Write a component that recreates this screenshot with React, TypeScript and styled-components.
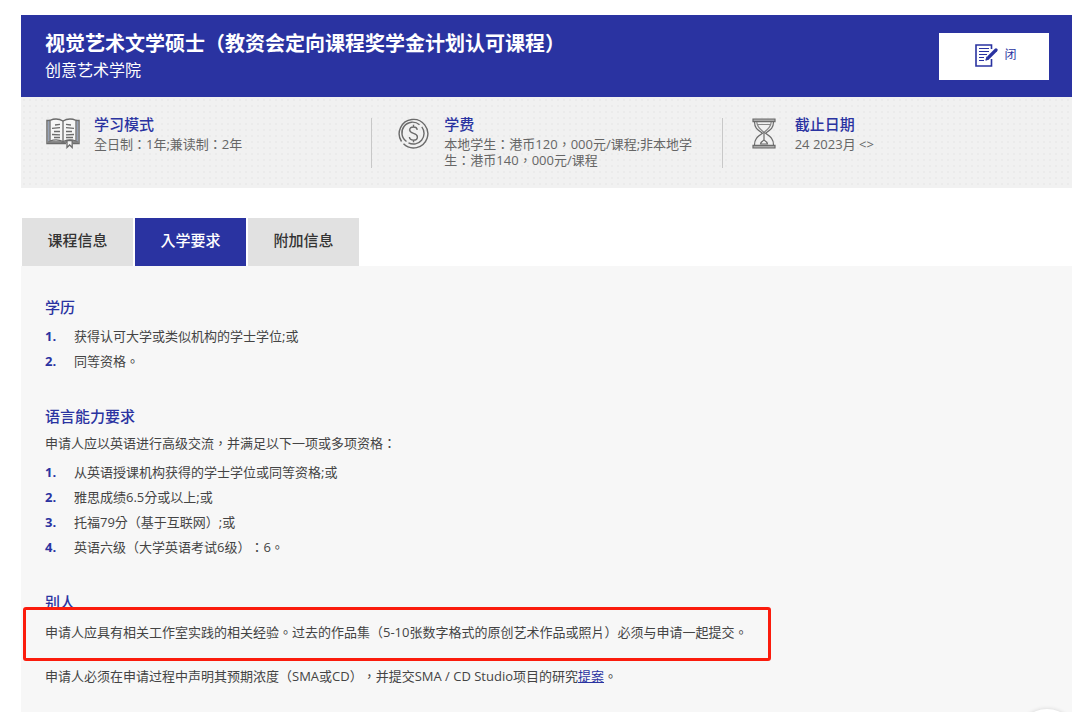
import React, { useState } from "react";
import styled, { createGlobalStyle } from "styled-components";

const navy = "#2a33a1";

const GlobalStyle = createGlobalStyle`
  *, *::before, *::after { box-sizing: border-box; }
  body {
    margin: 0;
    background: #fff;
    color: #444;
    font-family: "Open Sans", "Noto Sans CJK TC", sans-serif;
    font-size: 13px;
    line-height: 16px;
    text-spacing-trim: space-all;
  }
  h1, h2, h3, p, ol, ul { margin: 0; padding: 0; font-weight: 400; }
  ol, ul { list-style: none; }
  button { font: inherit; border: 0; cursor: pointer; }
`;

const Page = styled.main`
  display: flex;
  flex-direction: column;
  min-height: 100vh;
  padding: 15px 8px 0 21px;
`;

const Banner = styled.header`
  display: flex;
  justify-content: space-between;
  align-items: center;
  min-height: 82px;
  padding: 15px 23px 15px 24px;
  background: ${navy};
  color: #fff;
`;

const Title = styled.h1`
  font-size: 20px;
  line-height: 28px;
  font-weight: 600;
`;

const School = styled.p`
  font-size: 16px;
  line-height: 24px;
`;

const ApplyButton = styled.button`
  display: flex;
  flex: none;
  align-items: center;
  justify-content: center;
  gap: 6px;
  width: 110px;
  height: 47px;
  padding: 0 4px 2px 8px;
  background: #fff;
  color: ${navy};
  font-size: 12px;
`;

const Facts = styled.section`
  display: grid;
  grid-template-columns: repeat(3, 1fr);
  min-height: 91px;
  padding: 21px 0 20px;
  background: radial-gradient(circle, #ebebeb 1px, transparent 1px) 0 0 / 6px 6px #f1f1f1;
`;

const Fact = styled.div`
  display: flex;
  gap: 14px;
  padding: 0 24px;
  border-left: 1px solid #c8c8c8;
  &:first-child { border-left-color: transparent; }
`;

const IconBox = styled.span`
  display: flex;
  flex: none;
  justify-content: center;
  width: 34px;
`;

const FactTitle = styled.h2`
  font-size: 15px;
  line-height: 12px;
  margin-bottom: 6px;
  font-weight: 500;
  color: ${navy};
`;

const FactText = styled.p`
  color: #666;
`;

const Tabs = styled.div`
  display: flex;
  gap: 2px;
  margin-top: 30px;
  padding-left: 1px;
`;

const Tab = styled.button<{ $active: boolean }>`
  width: 111px;
  height: 48px;
  padding: 0 0 4px;
  background: ${(p) => (p.$active ? navy : "#e1e1e1")};
  color: ${(p) => (p.$active ? "#fff" : "#333")};
  font-size: 15px;
  font-weight: 500;
`;

const Panel = styled.section`
  flex: 1;
  padding: 29px 24px 24px;
  background: #f7f7f7;
`;

const Block = styled.section`
  margin-bottom: 30px;
`;

const Heading = styled.h3`
  font-size: 15px;
  line-height: 24px;
  font-weight: 500;
  color: ${navy};
`;

const Para = styled.p`
  line-height: 24px;
  margin-top: 3px;
`;

const List = styled.ol`
  margin-top: 5px;
`;

const Item = styled.li`
  display: flex;
  line-height: 25px;
`;

const Num = styled.span`
  flex: none;
  width: 29px;
  font-weight: 700;
  color: ${navy};
`;

const Marked = styled.p`
  position: relative;
  width: fit-content;
  margin: 6px 0 20px;
  line-height: 24px;
  &::after {
    content: "";
    position: absolute;
    inset: -13px -24px -17px -22px;
    border: 3px solid #fb1c0d;
    border-radius: 3px;
    pointer-events: none;
  }
`;

const Link = styled.a`
  color: ${navy};
  text-decoration: underline;
`;

const TopButton = styled.button`
  position: fixed;
  right: 3px;
  bottom: -57px;
  width: 60px;
  height: 60px;
  border-radius: 50%;
  background: #fff;
  box-shadow: 0 0 4px rgba(0, 0, 0, 0.15);
`;

const BookIcon = () => (
  <svg width="34" height="31" viewBox="0 0 34 31" fill="none" stroke="#6b6b6b" strokeWidth="1.3" aria-hidden="true">
    <path d="M4 2.500H1v23h19M26.500 25.500H33v-23h-3" strokeWidth="1.500" />
    <path d="M2.800 3v20.500M31.200 3v20.500" stroke="#8795ad" />
    <path d="M17 3C13 .6 8 .6 4 2.300V23c4-1.500 9-1.500 13 .5 4-2 9-2 13-.5V2.300C26 .6 21 .6 17 3Z" fill="#f6f6f6" />
    <path d="M17 3v20.500M2 24h13l2 1 2-1h13" />
    <path d="M9 7l5-.6M6 10.300l8-.6M8 13.500h6M6 16.500l8 .3M8 19.500h6M20 6.400l5 .6M20 9.700l8 .6M20 13.500h6M20 16.800l8-.3M20 19.500h7" />
    <path d="M21 22.500h5.200v7L23.600 27 21 29.500Z" fill="#f6f6f6" />
  </svg>
);

const CoinIcon = () => (
  <svg width="31" height="31" viewBox="0 0 31 31" fill="none" stroke="#6b6b6b" strokeWidth="1.400" aria-hidden="true">
    <path d="M3.500 23.500A14.300 14.300 0 1 1 29 20.500 14.300 14.300 0 0 1 5.500 25.800" />
    <path d="M21.500 6.800A10.600 10.600 0 1 0 8.500 23.500M23.800 8.900A10.600 10.600 0 0 1 10.500 24.800" />
    <path d="M19.300 11.800c-.3-1.800-1.700-2.800-3.800-2.800s-3.800 1.200-3.800 3.100c0 4.300 7.700 2.400 7.700 6.800 0 2-1.600 3.200-3.900 3.200s-3.900-1.100-4.100-3.100M15.500 6.800V9M15.500 22v2.300" />
  </svg>
);

const HourglassIcon = () => (
  <svg width="24" height="31" viewBox="0 0 24 31" fill="none" stroke="#6b6b6b" strokeWidth="1.200" aria-hidden="true">
    <path d="M1 1h22v2.600H1ZM1 27.400h22V30H1Z" fill="#aaa" />
    <path d="M2.500 4c0 6 3 7.800 8 11.300C5 19 2.500 21 2.500 27M21.500 4c0 6-3 7.800-8 11.300C19 19 21.500 21 21.500 27" />
    <path d="M4.800 4c.2 4 2.300 6 7.200 10.500C16.900 10 19 8 19.200 4M5.500 6.500h13" stroke="#888" />
    <path d="M12 14v8M8.500 26c.3-2 1.500-2.800 3.500-4 2 1.200 3.200 2 3.500 4Z" />
  </svg>
);

const FormIcon = () => (
  <svg width="23" height="23" viewBox="0 0 23 23" fill="none" stroke={navy} strokeWidth="1.600" aria-hidden="true">
    <path d="M16.500 5V1H1v21h15.500v-7" />
    <path d="M4 4.500h10M4 7.500h10M4 10.500h8M4 13.500h5M4 16.500h5" strokeWidth="1.200" />
    <path d="M21 6 14 13" strokeWidth="3.200" strokeLinecap="round" />
    <path d="m12 12.800 2.200 2.200-3.400 1.200Z" fill={navy} strokeWidth="1" />
  </svg>
);

const facts = [
  { icon: <BookIcon />, title: "学习模式", text: "全日制：1年;兼读制：2年" },
  { icon: <CoinIcon />, title: "学费", text: "本地学生：港币120，000元/课程;非本地学生：港币140，000元/课程" },
  { icon: <HourglassIcon />, title: "截止日期", text: "24 2023月 <>" },
];

const tabs = ["课程信息", "入学要求", "附加信息"];

const NumberedList = ({ items }: { items: string[] }) => (
  <List>
    {items.map((text, i) => (
      <Item key={text}>
        <Num>{i + 1}.</Num>
        <span>{text}</span>
      </Item>
    ))}
  </List>
);

export default function App() {
  const [active, setActive] = useState(1);
  return (
    <>
      <GlobalStyle />
      <Page>
        <Banner>
          <div>
            <Title>视觉艺术文学硕士（教资会定向课程奖学金计划认可课程）</Title>
            <School>创意艺术学院</School>
          </div>
          <ApplyButton type="button">
            <FormIcon />
            闭
          </ApplyButton>
        </Banner>
        <Facts>
          {facts.map((f) => (
            <Fact key={f.title}>
              <IconBox>{f.icon}</IconBox>
              <div>
                <FactTitle>{f.title}</FactTitle>
                <FactText>{f.text}</FactText>
              </div>
            </Fact>
          ))}
        </Facts>
        <Tabs role="tablist">
          {tabs.map((label, i) => (
            <Tab
              key={label}
              type="button"
              role="tab"
              aria-selected={active === i}
              $active={active === i}
              onClick={() => setActive(i)}
            >
              {label}
            </Tab>
          ))}
        </Tabs>
        <Panel role="tabpanel">
          <Block>
            <Heading>学历</Heading>
            <NumberedList items={["获得认可大学或类似机构的学士学位;或", "同等资格。"]} />
          </Block>
          <Block>
            <Heading>语言能力要求</Heading>
            <Para>申请人应以英语进行高级交流，并满足以下一项或多项资格：</Para>
            <NumberedList
              items={[
                "从英语授课机构获得的学士学位或同等资格;或",
                "雅思成绩6.5分或以上;或",
                "托福79分（基于互联网）;或",
                "英语六级（大学英语考试6级）：6。",
              ]}
            />
          </Block>
          <section>
            <Heading>别人</Heading>
            <Marked>
              申请人应具有相关工作室实践的相关经验。过去的作品集（5-10张数字格式的原创艺术作品或照片）必须与申请一起提交。
            </Marked>
            <Para>
              申请人必须在申请过程中声明其预期浓度（SMA或CD），并提交SMA / CD Studio项目的研究<Link href="#proposal">提案</Link>。
            </Para>
          </section>
        </Panel>
      </Page>
      <TopButton type="button" aria-label="返回顶部" />
    </>
  );
}
